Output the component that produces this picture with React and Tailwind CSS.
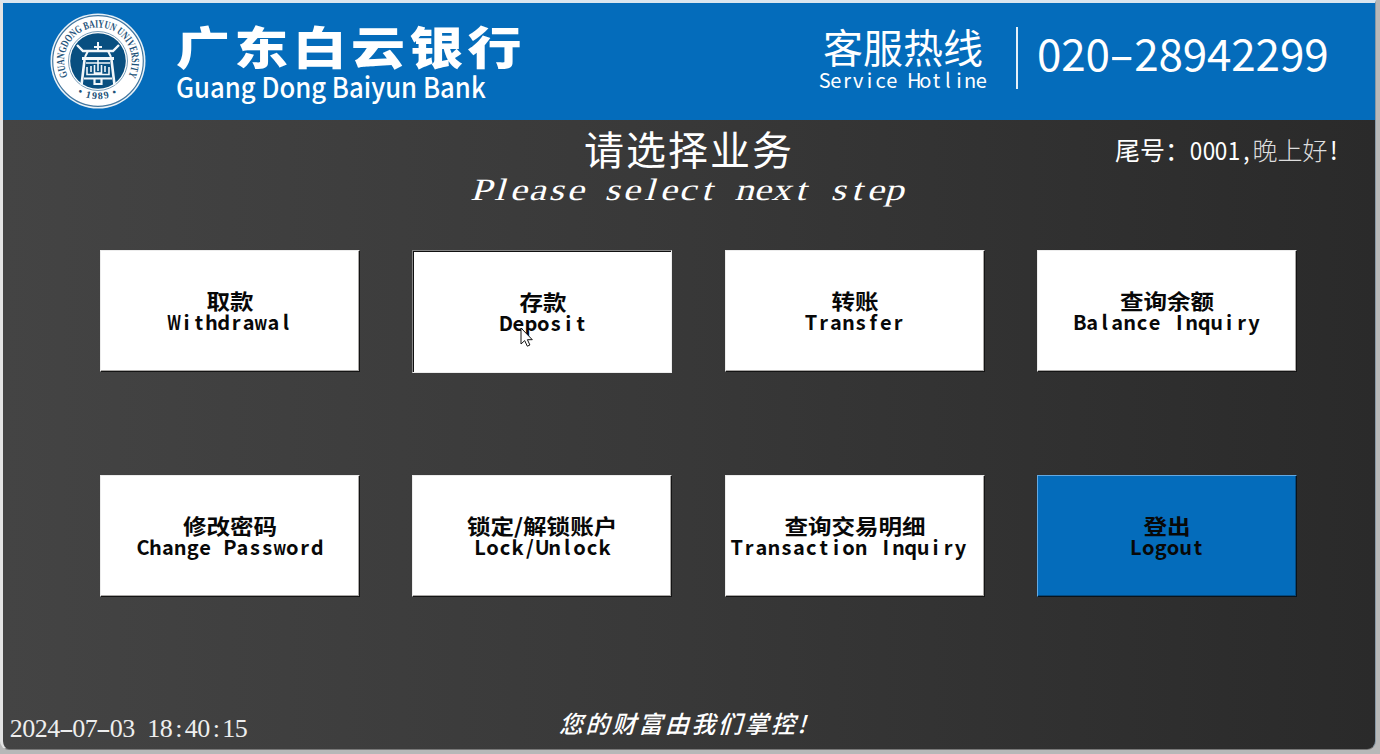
import React from "react";

const ACTIONS = [
  { zh: "取款", en: "Withdrawal" },
  { zh: "存款", en: "Deposit", pressed: true },
  { zh: "转账", en: "Transfer" },
  { zh: "查询余额", en: "Balance Inquiry" },
  { zh: "修改密码", en: "Change Password" },
  { zh: "锁定/解锁账户", en: "Lock/Unlock" },
  { zh: "查询交易明细", en: "Transaction Inquiry", shift: true },
  { zh: "登出", en: "Logout", primary: true },
];

// Fixed-pitch text: every character sits centred in a cell of equal width.
function Mono({ text, cell, glyph = "", wide = "scale-x-75" }) {
  return (
    <span className="inline-flex whitespace-pre">
      {[...text].map((ch, i) => (
        <span key={i} className={`flex justify-center ${cell}`}>
          <span className={`inline-block ${/[WwmM]/.test(ch) ? wide : ch === "-" ? "scale-x-[1.7]" : glyph}`}>{ch}</span>
        </span>
      ))}
    </span>
  );
}

function Seal() {
  return (
    <svg className="h-24 w-24 shrink-0" viewBox="0 0 96 96">
      <defs>
        <path id="ringTop" d="M17.9 63.5A33.8 33.8 0 1 1 78.1 63.5" />
        <path id="ringBottom" d="M13 65A39.5 39.5 0 0 0 83 65" />
      </defs>
      <circle cx="48" cy="48" r="47.5" fill="#e9f2f8" />
      <circle cx="48" cy="48" r="45.3" fill="#fff" stroke="#44779f" strokeWidth="1.2" />
      <circle cx="48" cy="48" r="29.5" fill="#fff" stroke="#7ba0ba" strokeWidth="1" />
      <circle cx="48" cy="48" r="27.8" fill="#084f80" />
      <text fill="#1d5279" fontFamily="Liberation Serif, serif" fontWeight="700" fontSize="11">
        <textPath href="#ringTop" startOffset="50%" textAnchor="middle" textLength="137" lengthAdjust="spacingAndGlyphs">GUANGDONG BAIYUN UNIVERSITY</textPath>
      </text>
      <text fill="#1d5279" fontFamily="Liberation Serif, serif" fontWeight="700" fontSize="10" letterSpacing="1.4">
        <textPath href="#ringBottom" startOffset="50%" textAnchor="middle">• 1989 •</textPath>
      </text>
      <g fill="none" stroke="#f2f7fa">
        <path d="M27 32l6 6h30l6-6" strokeWidth="2.4" />
        <path d="M48 29v9M44 34h8M38 38l-3 6M58 38l3 6" strokeWidth="2" />
        <path d="M32 45.500h32" strokeWidth="3" />
        <path d="M36 50h24M37 54v7.500h22V54M41 53v6M55 53v6M44.500 52v8h7v-8M48 46v12" strokeWidth="1.6" />
        <path d="M34.500 47l-3 25M61.500 47l3 25" strokeWidth="2.6" />
        <path d="M34 65.500h28M44.500 66v5h7v-5" strokeWidth="2.2" />
      </g>
    </svg>
  );
}

function ActionButton({ zh, en, pressed, primary, shift }) {
  const face = primary
    ? "bg-[#046cbb] border-t-[#63a9e2] border-l-[#63a9e2] border-b-[#09131c] border-r-[#09131c] shadow-[inset_-1px_-1px_0_#034b82]"
    : pressed
      ? "bg-white border-t-[#868686] border-l-[#868686] border-b-[#ededed] border-r-[#ededed] shadow-[inset_1px_1px_0_#101010]"
      : "bg-white border-t-[#ececec] border-l-[#ececec] border-b-[#141414] border-r-[#141414] shadow-[inset_-1px_-1px_0_#aaa8a6]";
  return (
    <button className={`relative flex flex-col items-center border pt-[37px] font-bold text-[#080808] ${pressed ? "h-[123px] w-[260px]" : "h-[122px] w-[260px]"} ${face}`}>
      <span className={`block scale-x-[1.12] whitespace-nowrap text-[21px] leading-[24px] ${pressed ? "translate-x-px translate-y-px" : ""}`}>{zh}</span>
      <span className={`block text-[20px] leading-[20px] ${pressed ? "translate-x-px translate-y-px" : shift ? "-translate-x-[6px]" : ""}`}>
        <Mono text={en} cell="w-[12.45px]" />
      </span>
      {pressed && (
        <svg className="absolute left-[107px] top-[76px] h-[21px] w-[14px]" viewBox="0 0 14 21">
          <path d="M1 1v16l3.7-3.4 2.6 5.6 2.6-1.2-2.5-5.3h4.9z" fill="#fff" stroke="#111" strokeWidth="1" />
        </svg>
      )}
    </button>
  );
}

export default function App() {
  return (
    <div className="h-[754px] w-[1380px] overflow-hidden bg-[#b8b8b8] font-['Noto_Sans_CJK_SC',sans-serif]">
      <div className="h-[750px] w-[1376px] overflow-hidden rounded-b-[9px] border-t-[3px] border-r border-b border-l-[3px] border-t-[#dbe6ef] border-r-[#8797a5] border-b-[#777] border-l-[#e4e4e4] bg-linear-to-r from-[#444444] via-[#383838] to-[#2a2a2a] text-white">
        <header className="flex h-[117px] bg-[#046cbb] pl-[47px]">
          <div className="pt-[10px]"><Seal /></div>
          <div className="ml-[30px] w-[642px]">
            <div className="mt-[16px] origin-left scale-x-[1.2] whitespace-nowrap text-[45px] font-black leading-[54px] tracking-[3.6px]">广东白云银行</div>
            <div className="-mt-[2px] origin-left scale-x-[0.918] whitespace-nowrap text-[28px] font-medium leading-[30px]">Guang Dong Baiyun Bank</div>
          </div>
          <div className="flex w-[170px] flex-col items-center">
            <div className="mt-[17px] text-[40px] leading-[52px]">客服热线</div>
            <div className="-mt-[3px] text-[20px] leading-[22px]"><Mono text="Service Hotline" cell="w-[11.2px]" /></div>
          </div>
          <div className="mt-[24px] ml-[28px] h-[62px] w-[2px] bg-[#e5f0f8]" />
          <div className="mt-[23px] ml-[19px] text-[44px] leading-[52px]"><Mono text="020-28942299" cell="w-[24.3px]" /></div>
        </header>

        <main className="relative h-[629px]">
          <div className="flex flex-col items-center">
            <h1 className="text-[40px] font-normal leading-[56px] tracking-[2px]">请选择业务</h1>
            <div className="-mt-[4px] ml-[3px] -skew-x-[16deg] font-['Liberation_Serif',serif] text-[31px] leading-[36px]">
              <Mono text="Please select next step" cell="w-[18.8px]" glyph="scale-x-[1.25]" />
            </div>
          </div>
          <div className="absolute right-[35px] top-[11px] flex text-[25px] leading-[36px]">
            <span>尾号：</span>
            <Mono text="0001," cell="w-[12.5px]" glyph="scale-x-90" />
            <span className="font-light text-[#dddddd]">晚上好</span>
            <Mono text="!" cell="w-[12.5px]" />
          </div>

          <div className="mt-[42px] ml-[97px] grid w-max grid-cols-[repeat(4,260px)] grid-rows-[122px_122px] gap-x-[52.3px] gap-y-[103px]">
            {ACTIONS.map((a) => <ActionButton key={a.en} {...a} />)}
          </div>

          <footer className="mt-[104px] flex">
            <div className="mt-[12px] ml-[7px] w-[540px] font-['Liberation_Serif',serif] text-[26px] leading-[32px] text-[#eeeeee]">
              <Mono text="2024-07-03 18:40:15" cell="w-[12.5px]" />
            </div>
            <div className="mt-[4px] ml-[11px] -skew-x-[16deg] whitespace-nowrap text-[24px] font-medium leading-[36px] tracking-[2.5px]">
              您的财富由我们掌控!
            </div>
          </footer>
        </main>
      </div>
    </div>
  );
}
